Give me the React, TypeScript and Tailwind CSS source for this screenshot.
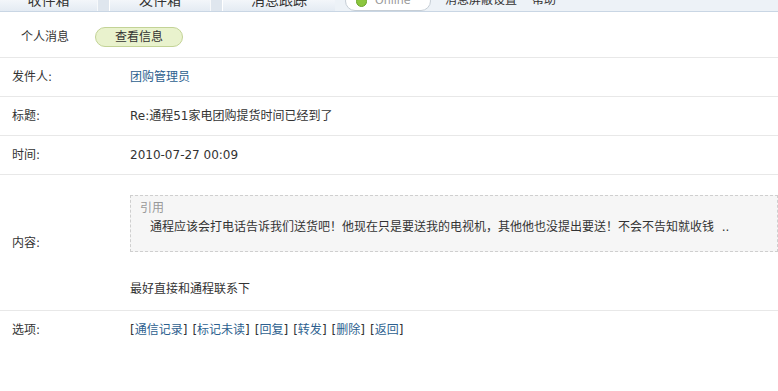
const font = { fontFamily: '"DejaVu Sans", "Noto Sans CJK SC", sans-serif' };

const Tab = ({ text, w }: { text: string; w: string }) => (
    <div className={`${w} h-full flex justify-center bg-gradient-to-b from-[#f3f6fa] to-[#e4ebf3] text-[14px] text-[#333] leading-[16px]`}>
        <span className="-mt-[8px]">{text}</span>
    </div>
);

const Sep = () => (
    <div className="w-[13px] h-full border-l border-l-[#f7f9fb] border-r border-r-white bg-[#dfe6ee]"></div>
);

const Row = ({ label, children, h = "h-[39px]", border = true }: any) => (
    <div className={`flex items-center ${h} ${border ? "border-b border-[#e8e8e8]" : ""}`}>
        <div className="w-[130px] shrink-0 pl-3 text-[#333]">{label}</div>
        <div className="flex-1 min-w-0">{children}</div>
    </div>
);

const App = () => {
    const links = ["通信记录", "标记未读", "回复", "转发", "删除", "返回"];
    return (
        <main className="w-[778px] h-[391px] bg-white overflow-hidden text-[12px]" style={font}>
            {/* tab bar, mostly scrolled off */}
            <div className="h-[12px] flex overflow-hidden border-b border-[#c9d6e4] bg-[#edf2f7]">
                <Tab text="收件箱" w="w-[97px]" />
                <Sep />
                <Tab text="发件箱" w="w-[100px]" />
                <Sep />
                <Tab text="消息跟踪" w="w-[112px]" />
                <div className="w-[10px]"></div>
                <div className="w-[86px] h-[20px] -mt-[9px] rounded-full border border-[#c6ced6] bg-white flex items-center pl-[10px] gap-2">
                    <span className="w-[11px] h-[11px] rounded-full bg-[#8cc63f] border border-[#6aa52a]"></span>
                    <span className="text-[11px] text-[#999]">Online</span>
                </div>
                <div className="ml-[14px] flex gap-[15px] text-[12px] text-[#333] leading-[14px]">
                    <span className="-mt-[7px]">消息屏蔽设置</span>
                    <span className="-mt-[7px]">帮助</span>
                </div>
            </div>

            <div className="flex items-center h-[46px] pt-[5px] border-b border-[#e8e8e8]">
                <div className="w-[95px] pl-[21px] text-[#333]">个人消息</div>
                <div className="w-[88px] h-[20px] rounded-full border border-[#c3d396] bg-[#e9f2cd] flex items-center justify-center text-[#333]">
                    查看信息
                </div>
            </div>

            <Row label="发件人:">
                <span className="text-[#2d5f8f]">团购管理员</span>
            </Row>
            <Row label="标题:">
                <span className="text-[#333]">Re:通程51家电团购提货时间已经到了</span>
            </Row>
            <Row label="时间:">
                <span className="text-[#333]">2010-07-27 00:09</span>
            </Row>
            <Row label="内容:" h="h-[136px]">
                <div className="pt-[20px] pb-[15px]">
                    <div className="border border-dashed border-[#cfcfcf] bg-[#f6f6f6] pt-[3px] pb-[14px] pl-[9px] leading-[19px]">
                        <div className="text-[#999]">引用</div>
                        <div className="pl-[10px] text-[#333] whitespace-nowrap">
                            通程应该会打电话告诉我们送货吧！他现在只是要送我的电视机，其他他也没提出要送！不会不告知就收钱 &nbsp;..
                        </div>
                    </div>
                    <div className="mt-[30px] text-[#333] leading-[14px]">最好直接和通程联系下</div>
                </div>
            </Row>
            <Row label="选项:" h="h-[37px]" border={false}>
                <div className="flex gap-[5px] text-[#333]">
                    {links.map((l) => (
                        <span key={l}>
                            [<a className="text-[#2d5f8f] cursor-pointer">{l}</a>]
                        </span>
                    ))}
                </div>
            </Row>
        </main>
    );
};

export default App;
